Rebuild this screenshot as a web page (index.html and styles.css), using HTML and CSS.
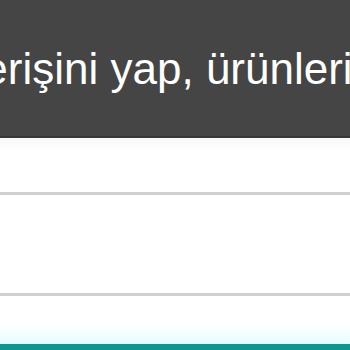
FILE: index.html
```html
<!DOCTYPE html>
<html lang="tr">
<head>
<meta charset="utf-8">
<link rel="stylesheet" href="styles.css">
</head>
<body>
<header class="banner">
  <p class="banner-text">Alışverişini yap, ürünlerini</p>
</header>
<section class="row row-first"></section>
<section class="row row-mid"></section>
<section class="row row-last"></section>
<footer class="accent"></footer>
</body>
</html>
```
FILE: styles.css
```css
html, body {
  margin: 0;
  padding: 0;
  background: #ffffff;
  overflow: hidden;
}
.banner {
  height: 136px;
  background: #454545;
  border-bottom: 2px solid #383838;
  overflow: hidden;
}
.banner-text {
  margin: 0;
  padding-top: 45px;
  white-space: nowrap;
  color: #ffffff;
  font-family: "Liberation Sans", Arial, sans-serif;
  font-size: 44px;
  line-height: 48px;
  margin-left: -112px;
}
.row {
  border-bottom: 3px solid #cfcfcf;
  background: #ffffff;
}
.row-first {
  height: 54px;
  background: linear-gradient(#f7f7f7, #ffffff 14px);
}
.row-mid {
  height: 98px;
}
.row-last {
  height: 48px;
  border-bottom: none;
  background: linear-gradient(#ffffff 60%, #e6fdff);
}
.accent {
  height: 6px;
  background: #10968c;
}
```
